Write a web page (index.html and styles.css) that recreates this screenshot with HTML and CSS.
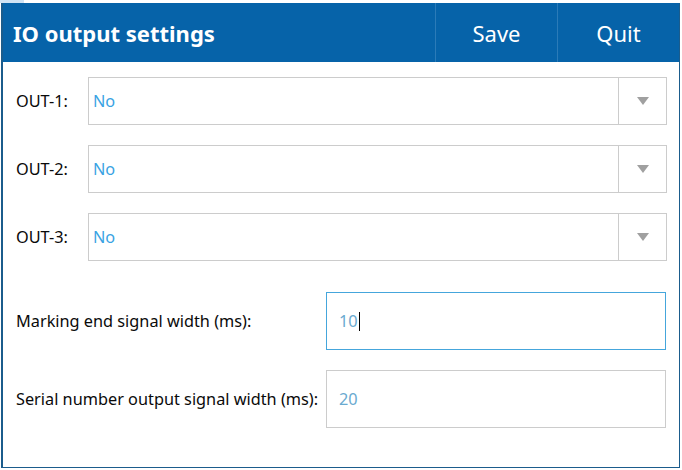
FILE: index.html
```html
<!DOCTYPE html>
<html>
<head>
<meta charset="utf-8">
<link rel="stylesheet" href="styles.css">
</head>
<body>
<div class="topstrip"><span class="tab"></span></div>
<div class="window">
  <div class="header">
    <div class="title">IO output settings</div>
    <div class="btn">Save</div>
    <div class="btn">Quit</div>
  </div>
  <div class="content">
    <div class="row">
      <div class="label">OUT-1:</div>
      <div class="select"><span class="value">No</span><span class="arrow"><svg width="12" height="8" viewBox="0 0 12 8"><path d="M0 0H12L6 8Z" fill="#a0a0a0"/></svg></span></div>
    </div>
    <div class="row">
      <div class="label">OUT-2:</div>
      <div class="select"><span class="value">No</span><span class="arrow"><svg width="12" height="8" viewBox="0 0 12 8"><path d="M0 0H12L6 8Z" fill="#a0a0a0"/></svg></span></div>
    </div>
    <div class="row">
      <div class="label">OUT-3:</div>
      <div class="select"><span class="value">No</span><span class="arrow"><svg width="12" height="8" viewBox="0 0 12 8"><path d="M0 0H12L6 8Z" fill="#a0a0a0"/></svg></span></div>
    </div>
    <div class="irow first">
      <div class="ilabel">Marking end signal width (ms):</div>
      <div class="input focused"><span class="ival">10</span><span class="caret"></span></div>
    </div>
    <div class="irow">
      <div class="ilabel">Serial number output signal width (ms):</div>
      <div class="input"><span class="ival">20</span></div>
    </div>
  </div>
</div>
</body>
</html>
```
FILE: styles.css
```css
html, body {
  margin: 0;
  padding: 0;
  background: #ffffff;
  width: 682px;
  height: 470px;
  overflow: hidden;
  font-family: "Noto Sans", "Open Sans", sans-serif;
}
.topstrip {
  height: 3px;
  display: flex;
}
.tab {
  width: 24px;
  height: 3px;
  background: #cfe3f4;
}
.window {
  margin-left: 1px;
  width: 676px;
  height: 464px;
  border: 1px solid #1b5c8c;
  border-top: none;
  border-left-width: 2px;
  display: flex;
  flex-direction: column;
}
.header {
  height: 59px;
  background: #0663a9;
  display: flex;
  align-items: stretch;
  color: #ffffff;
  flex-shrink: 0;
}
.title {
  flex: 1;
  display: flex;
  align-items: center;
  padding-left: 10px;
  padding-top: 1px;
  font-size: 22px;
  font-weight: bold;
}
.btn {
  width: 121px;
  border-left: 1px solid #2b7bb8;
  display: flex;
  align-items: center;
  justify-content: center;
  padding-top: 1px;
  font-size: 22px;
}
.content {
  padding: 15px 12px 0 13px;
  display: flex;
  flex-direction: column;
}
.row {
  display: flex;
  align-items: center;
  height: 48px;
  margin-bottom: 20px;
}
.label {
  width: 72px;
  font-size: 16.3px;
  color: #0a0a0a;
}
.select {
  flex: 1;
  height: 46px;
  border: 1px solid #cccccc;
  display: flex;
  align-items: center;
}
.value {
  flex: 1;
  padding-left: 4px;
  font-size: 16.3px;
  color: #3aa3e3;
}
.arrow {
  width: 47px;
  height: 46px;
  border-left: 1px solid #cccccc;
  display: flex;
  align-items: center;
  justify-content: center;
}
.irow {
  display: flex;
  align-items: center;
  height: 58px;
  margin-bottom: 20px;
}
.irow.first {
  margin-top: 11px;
}
.ilabel {
  width: 310px;
  font-size: 16.3px;
  color: #0a0a0a;
}
.input {
  flex: 1;
  height: 56px;
  border: 1px solid #cccccc;
  display: flex;
  align-items: center;
  padding-left: 12px;
  margin-right: 1px;
}
.input.focused {
  border-color: #45a6dc;
}
.ival {
  font-size: 16.3px;
  color: #6aaad0;
}
.caret {
  width: 1px;
  height: 19px;
  background: #000000;
  margin-left: 1px;
}
```
